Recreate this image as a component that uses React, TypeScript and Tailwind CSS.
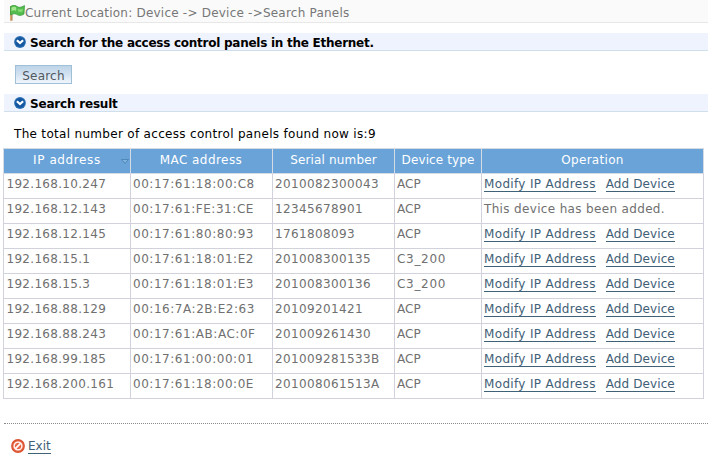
import React from "react";

type Row = { ip: string; mac: string; serial: string; type: string; added?: boolean };

const rows: Row[] = [
  { ip: "192.168.10.247", mac: "00:17:61:18:00:C8", serial: "2010082300043", type: "ACP" },
  { ip: "192.168.12.143", mac: "00:17:61:FE:31:CE", serial: "12345678901", type: "ACP", added: true },
  { ip: "192.168.12.145", mac: "00:17:61:80:80:93", serial: "1761808093", type: "ACP" },
  { ip: "192.168.15.1", mac: "00:17:61:18:01:E2", serial: "201008300135", type: "C3_200" },
  { ip: "192.168.15.3", mac: "00:17:61:18:01:E3", serial: "201008300136", type: "C3_200" },
  { ip: "192.168.88.129", mac: "00:16:7A:2B:E2:63", serial: "20109201421", type: "ACP" },
  { ip: "192.168.88.243", mac: "00:17:61:AB:AC:0F", serial: "201009261430", type: "ACP" },
  { ip: "192.168.99.185", mac: "00:17:61:00:00:01", serial: "201009281533B", type: "ACP" },
  { ip: "192.168.200.161", mac: "00:17:61:18:00:0E", serial: "201008061513A", type: "ACP" },
];

function Flag() {
  return (
    <svg width="16" height="16" viewBox="0 0 16 16" className="shrink-0">
      <path d="M1 1h2.200v14.800H1z" fill="#d9a878" />
      <path d="M3 1v14.500" stroke="#8d6a35" strokeWidth=".7" />
      <path d="M1.500 1.500C4-.2 6.500.1 8 1.500c1.800 1.200 4 1.200 7.500-1l-.5 8.500c-2.500 1.900-5.500 1.900-7.500.3-1.500-.9-3.200-.8-6 .7z" fill="#55bd4d" stroke="#35963a" strokeWidth=".7" />
      <path d="M2.500 2.800C4.300 1.400 6.200 1.500 7.200 2.700v3C5.500 4.800 4 5 2.500 6z" fill="#a5e58f" />
      <path d="M9 4c1.600.7 3.400.5 4.800-.2v2.500c-1.600.8-3.200.8-4.800 0z" fill="#86d975" />
    </svg>
  );
}

function Chevron() {
  return (
    <svg width="12" height="12" viewBox="0 0 12 12" className="shrink-0">
      <circle cx="6" cy="6" r="5.900" fill="#2c70b4" />
      <circle cx="6" cy="6" r="4.800" fill="#14569f" />
      <path d="M2.900 4.200 6 7.100l3.100-2.900" fill="none" stroke="#fff" strokeWidth="2.200" />
    </svg>
  );
}

function SectionTitle({ children }: { children: React.ReactNode }) {
  return (
    <h2 className="ml-1 flex h-[18px] items-center border-b border-[#cfdfec] bg-[#eff3fe] pl-2.5 text-[12px] font-bold text-black">
      <Chevron />
      {children}
    </h2>
  );
}

function Link({ children }: { children: React.ReactNode }) {
  return (
    <a className="inline-block h-[15px] border-b border-[#3f6279] leading-[15px] text-[#3f6076]">{children}</a>
  );
}

export default function App() {
  return (
    <div className="h-[456px] w-[708px] overflow-hidden bg-white font-['DejaVu_Sans',sans-serif] text-[12px] leading-[15px] text-[#707070]">
      <header className="ml-1 flex h-[23px] items-center border-b border-[#e8e8e8] bg-[#fafafa] pt-[4px] pl-[5px] text-[#777]">
        <Flag />
        <span className="pt-px tracking-[0.22px] whitespace-pre">Current Location: Device -&gt; Device -&gt;Search Panels</span>
      </header>

      <div className="pt-[10px]">
        <SectionTitle>
          <span className="ml-1 pt-[3px] tracking-[-0.26px]">Search for the access control panels in the Ethernet.</span>
        </SectionTitle>
      </div>

      <div className="pt-[14px] pl-[15px]">
        <button className="flex h-[19px] w-[57px] items-center justify-center border border-[#9fc0d6] bg-linear-to-b from-[#bdd4e8] via-[#d3e2f1] to-[#f0f6fc] pt-[4px] text-[12px] tracking-[0.2px] text-[#505860]">
          Search
        </button>
      </div>

      <div className="pt-[10px]">
        <SectionTitle>
          <span className="ml-1 pt-[3px] tracking-[-0.2px]">Search result</span>
        </SectionTitle>
      </div>

      <p className="pt-[15px] pl-[14px] tracking-[0.31px] text-black">The total number of access control panels found now is:9</p>

      <table className="mt-[6px] ml-[3px] w-[701px] table-fixed border-collapse">
        <colgroup>
          <col className="w-[127px]" />
          <col className="w-[142px]" />
          <col className="w-[122px]" />
          <col className="w-[87px]" />
          <col className="w-[222px]" />
        </colgroup>
        <thead>
          <tr className="h-[25px] bg-[#69a3d8] text-white">
            <th className="border border-[#d5dbe5] p-0 pb-[2px] font-normal">
              <div className="flex items-center pl-[29px]">
                <span className="tracking-[0.6px]">IP address</span>
                <svg width="8" height="5" viewBox="0 0 8 5" className="mt-[3px] ml-auto mr-[1px]">
                  <path d="M.5.5h7L4 4.300z" fill="#82b4e0" stroke="#427fae" strokeWidth=".8" />
                </svg>
              </div>
            </th>
            <th className="border border-[#d5dbe5] p-0 pr-px pb-[2px] font-normal tracking-[0.45px]">MAC address</th>
            <th className="border border-[#d5dbe5] p-0 pb-[2px] font-normal tracking-[0.15px]">Serial number</th>
            <th className="border border-[#d5dbe5] p-0 pb-[2px] font-normal tracking-[0.1px]">Device type</th>
            <th className="border border-[#d5dbe5] p-0 pb-[2px] font-normal tracking-[0.3px]">Operation</th>
          </tr>
        </thead>
        <tbody>
          {rows.map((r) => (
            <tr key={r.ip} className="h-[25px]">
              <td className="border border-[#d2d2dc] p-0 pb-[4px] pl-[2.5px] tracking-[0.3px]">{r.ip}</td>
              <td className="border border-[#d2d2dc] p-0 pb-[4px] pl-[2px] tracking-[0.54px]">{r.mac}</td>
              <td className="border border-[#d2d2dc] p-0 pb-[4px] pl-[2px] tracking-[0.37px]">{r.serial}</td>
              <td className="border border-[#d2d2dc] p-0 pb-[4px] pl-[2px]">
                <span className={r.type === "ACP" ? "tracking-[0.1px]" : "tracking-[0.7px]"}>{r.type}</span>
              </td>
              <td className="border border-[#d2d2dc] p-0 pb-[4px] pl-[2px] tracking-[0.34px]">
                {r.added ? (
                  "This device has been added."
                ) : (
                  <div className="flex gap-[10px]">
                    <Link>Modify IP Address</Link>
                    <span className="tracking-[0.1px]">
                      <Link>Add Device</Link>
                    </span>
                  </div>
                )}
              </td>
            </tr>
          ))}
        </tbody>
      </table>

      <div className="mt-[24px] ml-1 border-t border-dotted border-[#888]" />

      <div className="flex items-center gap-[3px] pt-[14px] pl-[11px]">
        <svg width="14" height="14" viewBox="0 0 14 14" className="-mt-px">
          <circle cx="7" cy="7" r="6.900" fill="#d9512f" />
          <circle cx="7" cy="7" r="5.600" fill="#e8694a" />
          <circle cx="7" cy="7" r="3.900" fill="#e8694a" stroke="#fff" strokeWidth="1.300" />
          <path d="m4.400 9.600 5.200-5.200" stroke="#fff" strokeWidth="1.700" />
        </svg>
        <a className="mt-px inline-block h-[15px] border-b border-[#3f6279] leading-[15px] text-[#3f6076]">Exit</a>
      </div>
    </div>
  );
}
